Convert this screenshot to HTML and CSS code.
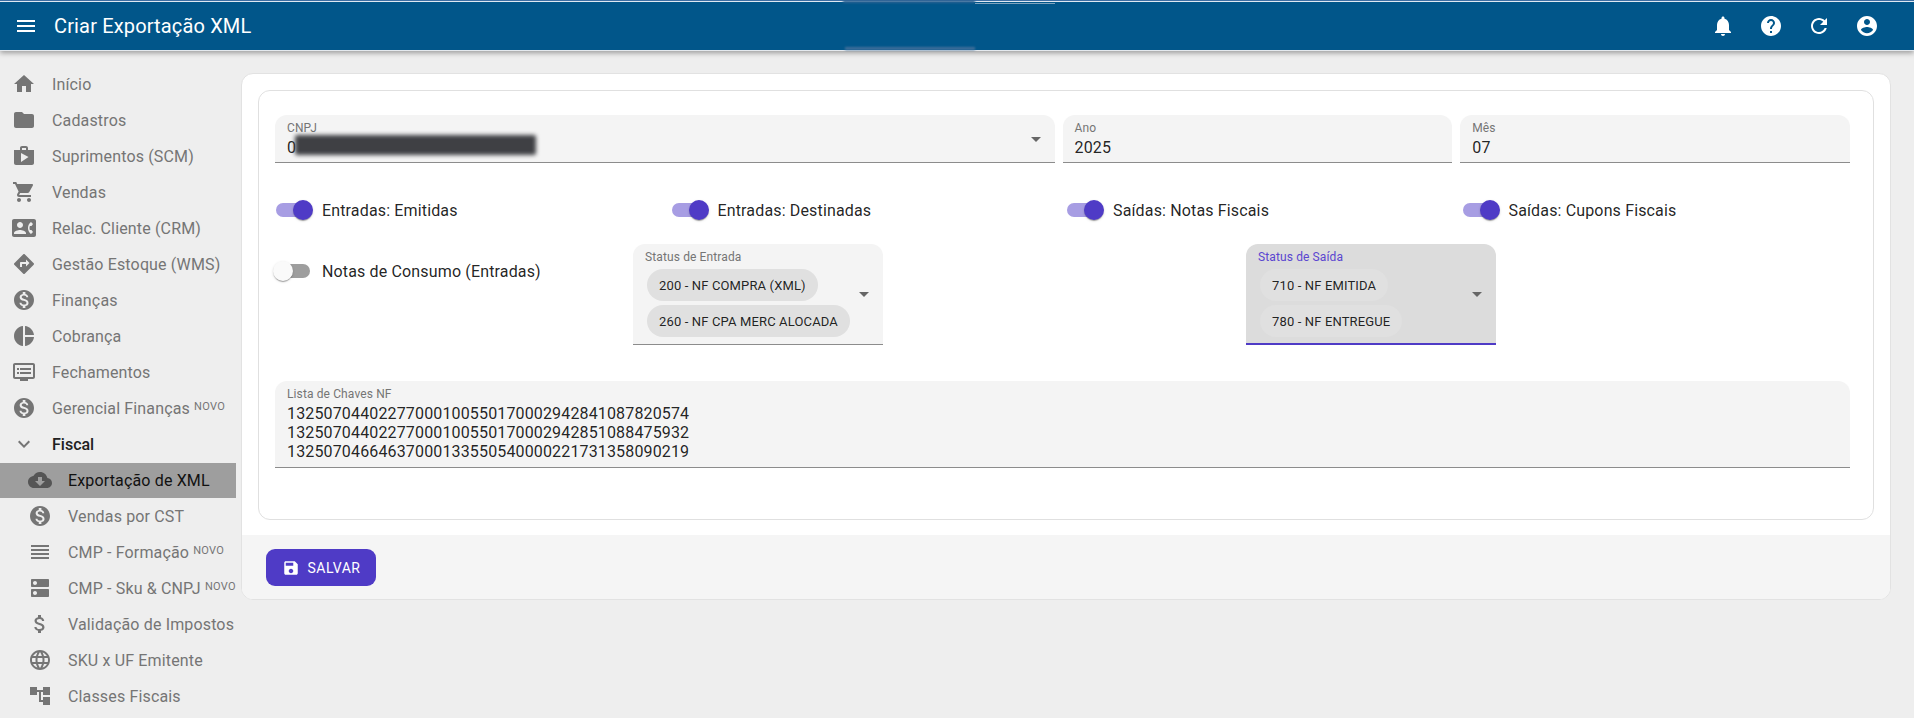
FILE: index.html
```html
<!DOCTYPE html>
<html lang="pt-BR">
<head>
<meta charset="utf-8">
<title>Criar Exportação XML</title>
<link rel="stylesheet" href="styles.css">
</head>
<body>
<svg class="defs" width="0" height="0">
<symbol id="i-menu" viewBox="0 0 24 24"><path d="M3 18h18v-2H3v2zm0-5h18v-2H3v2zm0-7v2h18V6H3z"/></symbol>
<symbol id="i-bell" viewBox="0 0 24 24"><path d="M12 22c1.1 0 2-.9 2-2h-4c0 1.1.89 2 2 2zm6-6v-5c0-3.07-1.64-5.64-4.5-6.32V4c0-.83-.67-1.5-1.5-1.5s-1.5.67-1.5 1.5v.68C7.63 5.36 6 7.92 6 11v5l-2 2v1h16v-1l-2-2z"/></symbol>
<symbol id="i-help" viewBox="0 0 24 24"><path d="M12 2C6.48 2 2 6.48 2 12s4.48 10 10 10 10-4.48 10-10S17.52 2 12 2zm1 17h-2v-2h2v2zm2.07-7.75l-.9.92C13.45 12.9 13 13.5 13 15h-2v-.5c0-1.1.45-2.1 1.17-2.83l1.24-1.26c.37-.36.59-.86.59-1.41 0-1.1-.9-2-2-2s-2 .9-2 2H8c0-2.21 1.79-4 4-4s4 1.79 4 4c0 .88-.36 1.68-.93 2.25z"/></symbol>
<symbol id="i-refresh" viewBox="0 0 24 24"><path d="M17.65 6.35C16.2 4.9 14.21 4 12 4c-4.42 0-7.99 3.58-7.99 8s3.57 8 7.99 8c3.73 0 6.84-2.55 7.73-6h-2.08c-.82 2.33-3.04 4-5.65 4-3.31 0-6-2.69-6-6s2.69-6 6-6c1.66 0 3.14.69 4.22 1.78L13 11h7V4l-2.35 2.35z"/></symbol>
<symbol id="i-account" viewBox="0 0 24 24"><path d="M12 2C6.48 2 2 6.48 2 12s4.48 10 10 10 10-4.48 10-10S17.52 2 12 2zm0 3c1.66 0 3 1.34 3 3s-1.34 3-3 3-3-1.34-3-3 1.34-3 3-3zm0 14.2c-2.5 0-4.71-1.28-6-3.22.03-1.99 4-3.08 6-3.08 1.99 0 5.97 1.09 6 3.08-1.29 1.94-3.5 3.22-6 3.22z"/></symbol>
<symbol id="i-home" viewBox="0 0 24 24"><path d="M10 20v-6h4v6h5v-8h3L12 3 2 12h3v8z"/></symbol>
<symbol id="i-folder" viewBox="0 0 24 24"><path d="M10 4H4c-1.1 0-1.99.9-1.99 2L2 18c0 1.1.9 2 2 2h16c1.1 0 2-.9 2-2V8c0-1.1-.9-2-2-2h-8l-2-2z"/></symbol>
<symbol id="i-shop" viewBox="0 0 24 24"><path d="M16 6V4c0-1.11-.89-2-2-2h-4c-1.11 0-2 .89-2 2v2H2v13c0 1.11.89 2 2 2h16c1.11 0 2-.89 2-2V6h-6zM10 4h4v2h-4V4zM9 18V9l7.5 4L9 18z"/></symbol>
<symbol id="i-cart" viewBox="0 0 24 24"><path d="M7 18c-1.1 0-1.99.9-1.99 2S5.9 22 7 22s2-.9 2-2-.9-2-2-2zM1 2v2h2l3.6 7.59-1.35 2.45c-.16.28-.25.61-.25.96 0 1.1.9 2 2 2h12v-2H7.42c-.14 0-.25-.11-.25-.25l.03-.12.9-1.63h7.45c.75 0 1.41-.41 1.75-1.03l3.58-6.49c.08-.14.12-.31.12-.48 0-.55-.45-1-1-1H5.21l-.94-2H1zm16 16c-1.1 0-1.99.9-1.99 2s.89 2 1.99 2 2-.9 2-2-.9-2-2-2z"/></symbol>
<symbol id="i-contact" viewBox="0 0 24 24"><path d="M22 3H2C.9 3 0 3.9 0 5v14c0 1.1.9 2 2 2h20c1.1 0 1.99-.9 1.99-2L24 5c0-1.1-.9-2-2-2zM8 6c1.66 0 3 1.34 3 3s-1.34 3-3 3-3-1.34-3-3 1.34-3 3-3zm6 12H2v-1c0-2 4-3.1 6-3.1s6 1.1 6 3.1v1zm3.85-4h1.64L21 16l-1.99 1.99c-1.31-.98-2.28-2.38-2.73-3.99-.18-.64-.28-1.31-.28-2s.1-1.36.28-2c.45-1.62 1.42-3.01 2.73-3.99L21 8l-1.51 2h-1.64c-.22.63-.35 1.3-.35 2s.13 1.37.35 2z"/></symbol>
<symbol id="i-directions" viewBox="0 0 24 24"><path d="M21.71 11.29l-9-9c-.39-.39-1.02-.39-1.41 0l-9 9c-.39.39-.39 1.02 0 1.41l9 9c.39.39 1.02.39 1.41 0l9-9c.39-.38.39-1.01 0-1.41zM14 14.5V12h-4v3H8v-4c0-.55.45-1 1-1h5V7.5l3.5 3.5-3.5 3.5z"/></symbol>
<symbol id="i-money" viewBox="0 0 24 24"><path d="M12 2C6.48 2 2 6.48 2 12s4.48 10 10 10 10-4.48 10-10S17.52 2 12 2zm1.41 16.09V20h-2.67v-1.93c-1.71-.36-3.16-1.46-3.27-3.4h1.96c.1 1.05.82 1.87 2.65 1.87 1.96 0 2.4-.98 2.4-1.59 0-.83-.44-1.61-2.67-2.14-2.48-.6-4.18-1.62-4.18-3.67 0-1.72 1.39-2.84 3.11-3.21V4h2.67v1.95c1.86.45 2.79 1.86 2.85 3.39H14.3c-.05-1.11-.64-1.87-2.22-1.87-1.5 0-2.4.68-2.4 1.64 0 .84.65 1.39 2.67 1.91s4.18 1.39 4.18 3.91c-.01 1.83-1.38 2.83-3.12 3.16z"/></symbol>
<symbol id="i-pie" viewBox="0 0 24 24"><path d="M11 2v20c-5.07-.5-9-4.79-9-10s3.93-9.5 9-10zm2.03 0v8.99H22c-.47-4.74-4.24-8.52-8.97-8.99zm0 11.01V22c4.74-.47 8.5-4.25 8.97-8.99h-8.97z"/></symbol>
<symbol id="i-screen" viewBox="0 0 24 24"><path d="M21 3H3c-1.1 0-2 .9-2 2v12c0 1.1.9 2 2 2h5v2h8v-2h5c1.1 0 1.99-.9 1.99-2L23 5c0-1.1-.9-2-2-2zm0 14H3V5h18v12zm-2-9H8v2h11V8zm0 4H8v2h11v-2zM7 8H5v2h2V8zm0 4H5v2h2v-2z"/></symbol>
<symbol id="i-expand" viewBox="0 0 24 24"><path d="M16.59 8.59L12 13.17 7.41 8.59 6 10l6 6 6-6z"/></symbol>
<symbol id="i-cloud" viewBox="0 0 24 24"><path d="M19.35 10.04C18.67 6.59 15.64 4 12 4 9.11 4 6.6 5.64 5.35 8.04 2.34 8.36 0 10.91 0 14c0 3.31 2.69 6 6 6h13c2.76 0 5-2.24 5-5 0-2.64-2.05-4.78-4.65-4.96zM17 13l-5 5-5-5h3V9h4v4h3z"/></symbol>
<symbol id="i-reorder" viewBox="0 0 24 24"><path d="M3 15h18v-2H3v2zm0 4h18v-2H3v2zm0-8h18V9H3v2zm0-6v2h18V5H3z"/></symbol>
<symbol id="i-dns" viewBox="0 0 24 24"><path d="M20 13H4c-.55 0-1 .45-1 1v6c0 .55.45 1 1 1h16c.55 0 1-.45 1-1v-6c0-.55-.45-1-1-1zM7 19c-1.1 0-2-.9-2-2s.9-2 2-2 2 .9 2 2-.9 2-2 2zM20 3H4c-.55 0-1 .45-1 1v6c0 .55.45 1 1 1h16c.55 0 1-.45 1-1V4c0-.55-.45-1-1-1zM7 9c-1.1 0-2-.9-2-2s.9-2 2-2 2 .9 2 2-.9 2-2 2z"/></symbol>
<symbol id="i-dollar" viewBox="0 0 24 24"><path d="M11.8 10.9c-2.27-.59-3-1.2-3-2.15 0-1.09 1.01-1.85 2.7-1.85 1.78 0 2.44.85 2.5 2.1h2.21c-.07-1.72-1.12-3.3-3.21-3.81V3h-3v2.16c-1.94.42-3.5 1.68-3.5 3.61 0 2.31 1.91 3.46 4.7 4.13 2.5.6 3 1.48 3 2.41 0 .69-.49 1.79-2.7 1.79-2.06 0-2.87-.92-2.98-2.1h-2.2c.12 2.19 1.76 3.42 3.68 3.83V21h3v-2.15c1.95-.37 3.5-1.5 3.5-3.55 0-2.84-2.43-3.81-4.7-4.4z"/></symbol>
<symbol id="i-globe" viewBox="0 0 24 24"><path d="M11.99 2C6.47 2 2 6.48 2 12s4.47 10 9.99 10C17.52 22 22 17.52 22 12S17.52 2 11.99 2zm6.93 6h-2.95c-.32-1.25-.78-2.45-1.38-3.56 1.84.63 3.37 1.91 4.33 3.56zM12 4.04c.83 1.2 1.48 2.53 1.91 3.96h-3.82c.43-1.43 1.08-2.76 1.91-3.96zM4.26 14C4.1 13.36 4 12.69 4 12s.1-1.36.26-2h3.38c-.08.66-.14 1.32-.14 2 0 .68.06 1.34.14 2H4.26zm.82 2h2.95c.32 1.25.78 2.45 1.38 3.56-1.84-.63-3.37-1.9-4.33-3.56zm2.95-8H5.08c.96-1.66 2.49-2.93 4.33-3.56C8.81 5.55 8.35 6.75 8.03 8zM12 19.96c-.83-1.2-1.48-2.53-1.91-3.96h3.82c-.43 1.43-1.08 2.76-1.91 3.96zM14.34 14H9.66c-.09-.66-.16-1.32-.16-2 0-.68.07-1.35.16-2h4.68c.09.65.16 1.32.16 2 0 .68-.07 1.34-.16 2zm.25 5.56c.6-1.11 1.06-2.31 1.38-3.56h2.95c-.96 1.65-2.49 2.93-4.33 3.56zM16.36 14c.08-.66.14-1.32.14-2 0-.68-.06-1.34-.14-2h3.38c.16.64.26 1.31.26 2s-.1 1.36-.26 2h-3.38z"/></symbol>
<symbol id="i-tree" viewBox="0 0 24 24"><path d="M22 11V3h-7v3H9V3H2v8h7V8h2v10h4v3h7v-8h-7v3h-2V8h2v3z"/></symbol>
<symbol id="i-save" viewBox="0 0 24 24"><path d="M17 3H5c-1.11 0-2 .9-2 2v14c0 1.1.89 2 2 2h14c1.1 0 2-.9 2-2V7l-4-4zm-5 16c-1.66 0-3-1.34-3-3s1.34-3 3-3 3 1.34 3 3-1.34 3-3 3zm3-10H5V5h10v4z"/></symbol>
<symbol id="i-arrow" viewBox="0 0 24 24"><path d="M7 10l5 5 5-5z"/></symbol>
</svg>

<header class="topbar">
  <div class="smear smear-top"></div>
  <div class="smear smear-top-light"></div>
  <div class="smear smear-bottom"></div>
  <button class="icon-btn menu-btn" type="button"><svg class="icon"><use href="#i-menu"/></svg></button>
  <h1 class="title">Criar Exportação XML</h1>
  <div class="top-actions">
    <button class="icon-btn" type="button"><svg class="icon"><use href="#i-bell"/></svg></button>
    <button class="icon-btn" type="button"><svg class="icon"><use href="#i-help"/></svg></button>
    <button class="icon-btn" type="button"><svg class="icon"><use href="#i-refresh"/></svg></button>
    <button class="icon-btn" type="button"><svg class="icon"><use href="#i-account"/></svg></button>
  </div>
</header>

<div class="layout">
  <nav class="sidebar">
    <a class="nav-item"><svg class="icon"><use href="#i-home"/></svg><span>Início</span></a>
    <a class="nav-item"><svg class="icon"><use href="#i-folder"/></svg><span>Cadastros</span></a>
    <a class="nav-item"><svg class="icon"><use href="#i-shop"/></svg><span>Suprimentos (SCM)</span></a>
    <a class="nav-item"><svg class="icon"><use href="#i-cart"/></svg><span>Vendas</span></a>
    <a class="nav-item"><svg class="icon"><use href="#i-contact"/></svg><span>Relac. Cliente (CRM)</span></a>
    <a class="nav-item"><svg class="icon"><use href="#i-directions"/></svg><span>Gestão Estoque (WMS)</span></a>
    <a class="nav-item"><svg class="icon"><use href="#i-money"/></svg><span>Finanças</span></a>
    <a class="nav-item"><svg class="icon"><use href="#i-pie"/></svg><span>Cobrança</span></a>
    <a class="nav-item"><svg class="icon"><use href="#i-screen"/></svg><span>Fechamentos</span></a>
    <a class="nav-item"><svg class="icon"><use href="#i-money"/></svg><span>Gerencial Finanças <sup class="novo">NOVO</sup></span></a>
    <a class="nav-item nav-open"><svg class="icon"><use href="#i-expand"/></svg><span>Fiscal</span></a>
    <a class="nav-item nav-sub nav-active"><svg class="icon"><use href="#i-cloud"/></svg><span>Exportação de XML</span></a>
    <a class="nav-item nav-sub"><svg class="icon"><use href="#i-money"/></svg><span>Vendas por CST</span></a>
    <a class="nav-item nav-sub"><svg class="icon"><use href="#i-reorder"/></svg><span>CMP - Formação <sup class="novo">NOVO</sup></span></a>
    <a class="nav-item nav-sub"><svg class="icon"><use href="#i-dns"/></svg><span>CMP - Sku &amp; CNPJ <sup class="novo">NOVO</sup></span></a>
    <a class="nav-item nav-sub"><svg class="icon"><use href="#i-dollar"/></svg><span>Validação de Impostos</span></a>
    <a class="nav-item nav-sub"><svg class="icon"><use href="#i-globe"/></svg><span>SKU x UF Emitente</span></a>
    <a class="nav-item nav-sub"><svg class="icon"><use href="#i-tree"/></svg><span>Classes Fiscais</span></a>
  </nav>

  <main class="main">
    <section class="card">
      <div class="card-body">
        <div class="panel">
          <div class="top-fields">
            <div class="field field-select">
              <div class="field-content">
                <div class="field-label">CNPJ</div>
                <div class="field-value">0</div>
              </div>
              <svg class="arrow"><use href="#i-arrow"/></svg>
              <div class="redaction"></div>
            </div>
            <div class="field">
              <div class="field-content">
                <div class="field-label">Ano</div>
                <div class="field-value">2025</div>
              </div>
            </div>
            <div class="field">
              <div class="field-content">
                <div class="field-label">Mês</div>
                <div class="field-value">07</div>
              </div>
            </div>
          </div>

          <div class="toggle-row">
            <label class="toggle toggle-on"><span class="track"><span class="thumb"></span></span><span>Entradas: Emitidas</span></label>
            <label class="toggle toggle-on"><span class="track"><span class="thumb"></span></span><span>Entradas: Destinadas</span></label>
            <label class="toggle toggle-on"><span class="track"><span class="thumb"></span></span><span>Saídas: Notas Fiscais</span></label>
            <label class="toggle toggle-on"><span class="track"><span class="thumb"></span></span><span>Saídas: Cupons Fiscais</span></label>
          </div>

          <div class="status-row">
            <label class="toggle toggle-off"><span class="track"><span class="thumb"></span></span><span>Notas de Consumo (Entradas)</span></label>
            <div class="field field-select status">
              <div class="field-content">
                <div class="field-label">Status de Entrada</div>
                <div class="chips">
                  <span class="chip">200 - NF COMPRA (XML)</span>
                  <span class="chip">260 - NF CPA MERC ALOCADA</span>
                </div>
              </div>
              <svg class="arrow"><use href="#i-arrow"/></svg>
            </div>
            <div class="field field-select status focused">
              <div class="field-content">
                <div class="field-label">Status de Saída</div>
                <div class="chips">
                  <span class="chip">710 - NF EMITIDA</span>
                  <span class="chip">780 - NF ENTREGUE</span>
                </div>
              </div>
              <svg class="arrow"><use href="#i-arrow"/></svg>
            </div>
          </div>

          <div class="field field-area">
            <div class="field-content">
              <div class="field-label">Lista de Chaves NF</div>
              <div class="field-value">13250704402277000100550170002942841087820574<br>13250704402277000100550170002942851088475932<br>13250704664637000133550540000221731358090219</div>
            </div>
          </div>
        </div>
      </div>
      <footer class="card-footer">
        <button class="save-btn" type="button"><svg class="save-icon"><use href="#i-save"/></svg>SALVAR</button>
      </footer>
    </section>
  </main>
</div>
</body>
</html>
```

FILE: styles.css
```css
* { box-sizing: border-box; }
html, body { margin: 0; height: 100%; }
body {
  background: #eeeeee;
  color: rgba(0, 0, 0, 0.87);
  font-family: Roboto, "Liberation Sans", sans-serif;
  font-size: 16px;
  letter-spacing: 0.15px;
  overflow: hidden;
}
.defs { position: absolute; }
.icon { width: 24px; height: 24px; fill: currentColor; flex: none; display: block; }

.topbar {
  position: relative;
  height: 51px;
  display: flex;
  align-items: center;
  padding: 2px 23px 1px 2px;
  background: #01568a;
  border-top: 1px solid #3e6ea3;
  border-bottom: 1px solid #e4e9ee;
  box-shadow: inset 0 1px 0 #dfe8f2, 0 2px 5px rgba(0, 0, 0, 0.35);
  color: #fff;
}
.smear { position: absolute; filter: blur(1px); }
.smear-top { left: 843px; width: 132px; top: -1px; height: 3px; background: #2b6292; }
.smear-top-light { left: 975px; width: 80px; top: 2px; height: 1px; background: #7ea2be; filter: blur(.5px); }
.smear-bottom { left: 845px; width: 130px; top: 46px; height: 3px; background: #416f9a; }
.icon-btn {
  width: 48px;
  height: 48px;
  padding: 0;
  border: 0;
  background: none;
  color: inherit;
  display: flex;
  align-items: center;
  justify-content: center;
}
.menu-btn { width: 48px; }
.title { margin: 0 0 0 4px; font-size: 20px; font-weight: 400; letter-spacing: 0.15px; }
.top-actions { margin-left: auto; display: flex; }

.layout { display: flex; align-items: flex-start; padding-top: 15px; }
.sidebar { width: 236px; flex: none; display: flex; flex-direction: column; }
.nav-item {
  height: 36px;
  display: flex;
  align-items: center;
  gap: 16px;
  padding-left: 12px;
  color: #757575;
  white-space: nowrap;
}
.nav-open { color: #212121; font-weight: 500; letter-spacing: 0; }
.nav-open .icon { color: #757575; }
.nav-sub { padding-left: 28px; }
.nav-active { background: linear-gradient(#9e9e9e, #9e9e9e) 0 1px no-repeat; color: #111; }
.nav-active .icon { color: #555; }
.novo { font-size: 11px; letter-spacing: 0.3px; vertical-align: 4px; line-height: 0; }

.main { flex: 1; min-width: 0; padding: 7px 23px 0 5px; }
.card {
  background: #fff;
  border: 1px solid #e2e2e2;
  border-radius: 12px;
  overflow: hidden;
}
.card-body { padding: 16px 16px 15px; }
.panel {
  border: 1px solid #e0e0e0;
  border-radius: 12px;
  padding: 24px 23px 51px 16px;
}
.top-fields { display: grid; grid-template-columns: 2fr 1fr 1fr; gap: 8px; }
.field {
  position: relative;
  display: flex;
  align-items: center;
  background: #f4f4f4;
  border-bottom: 1px solid #8c8c8c;
  border-radius: 12px 12px 0 0;
  min-height: 48px;
}
.field-content { flex: 1; min-width: 0; padding: 0 12px; }
.field-label { font-size: 12px; line-height: 14px; color: #757575; letter-spacing: 0.12px; margin-top: 6px; }
.field-value { line-height: 19px; margin-top: 3px; padding-bottom: 5px; }
.arrow { width: 24px; height: 24px; fill: #666; margin-right: 7px; flex: none; }
.redaction {
  position: absolute;
  left: 20px;
  top: 20px;
  width: 241px;
  height: 20px;
  background: #3f4044;
  border-radius: 2px;
  filter: blur(2px);
}

.toggle-row { display: grid; grid-template-columns: repeat(4, 395.5px); margin-top: 28px; }
.toggle { display: flex; align-items: center; gap: 12px; height: 38px; padding-left: 1px; }
.track {
  position: relative;
  width: 34px;
  height: 14px;
  border-radius: 7px;
  flex: none;
  background: #a79de3;
}
.thumb {
  position: absolute;
  top: -3px;
  width: 20px;
  height: 20px;
  border-radius: 50%;
  box-shadow: 0 2px 1px -1px rgba(0,0,0,.2), 0 1px 1px rgba(0,0,0,.14), 0 1px 3px rgba(0,0,0,.12);
}
.toggle-on .thumb { left: 17px; background: #4f3bc6; }
.toggle-off .track { background: #9e9e9e; }
.toggle-off .thumb { left: -3px; background: #fafafa; }

.status-row {
  display: grid;
  grid-template-columns: 358px 613px 250px;
  align-items: start;
  margin-top: 15px;
}
.status-row .toggle { margin-top: 8px; }
.status { width: 250px; height: 101px; align-items: center; }
.status .field-content { align-self: flex-start; padding: 0 0 0 12px; }
.chips { display: flex; flex-direction: column; align-items: flex-start; gap: 4px; margin: 5px 0 0 2px; }
.chip {
  height: 32px;
  display: flex;
  align-items: center;
  padding: 0 12px;
  border-radius: 16px;
  background: #e0e0e0;
  font-size: 13px;
  letter-spacing: 0.14px;
  white-space: nowrap;
}
.focused { background: #dcdcdc; border-bottom: 2px solid #4f3bc6; }
.focused .field-label { color: #5a46d0; }

.field-area { margin-top: 36px; height: 87px; align-items: flex-start; }
.field-area .field-value { margin-top: 3px; padding: 0; }

.card-footer { background: #f5f5f5; padding: 14px 24px; height: 64px; }
.save-btn {
  height: 37px;
  width: 110px;
  display: flex;
  align-items: center;
  justify-content: center;
  gap: 8px;
  border: 0;
  border-radius: 9px;
  background: #4f3bc6;
  color: #fff;
  font: 400 14px Roboto, "Liberation Sans", sans-serif;
  letter-spacing: 0.5px;
}
.save-icon { width: 18px; height: 18px; fill: #fff; flex: none; }
```
